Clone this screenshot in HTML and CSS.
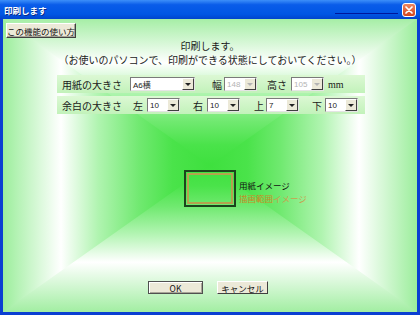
FILE: index.html
```html
<!DOCTYPE html>
<html lang="ja">

<head>
  <meta charset="UTF-8" />
  <title>印刷します</title>
  <link rel="stylesheet" href="styles.css">
</head>

<body>
  <div class="window">
    <div class="titlebar">
      <span class="title">印刷します</span>
      <span class="title-line"></span>
      <span class="close">
        <svg width="8" height="8" viewBox="0 0 8 8"><path d="M1 1L7 7M7 1L1 7" stroke="#fff" stroke-width="1.7" stroke-linecap="round" /></svg>
      </span>
    </div>

    <div class="client">
      <div class="content">
        <button class="help">この機能の使い方</button>

        <p class="message">印刷します。<br>（お使いのパソコンで、印刷ができる状態にしておいてください。）</p>

        <div class="settings">
          <div class="row">
            <span class="label">用紙の大きさ</span>
            <span class="combo paper"><span class="val">A6横</span><span class="drop"></span></span>
            <span class="word w-haba">幅</span>
            <span class="combo small off"><span class="val">148</span><span class="drop"></span></span>
            <span class="word w-takasa">高さ</span>
            <span class="combo small off"><span class="val">105</span><span class="drop"></span></span>
            <span class="unit">mm</span>
          </div>
          <div class="row">
            <span class="label">余白の大きさ</span>
            <span class="word w-left">左</span>
            <span class="combo small"><span class="val">10</span><span class="drop"></span></span>
            <span class="word w-right">右</span>
            <span class="combo small"><span class="val">10</span><span class="drop"></span></span>
            <span class="word w-top">上</span>
            <span class="combo small"><span class="val">7</span><span class="drop"></span></span>
            <span class="word w-bottom">下</span>
            <span class="combo small"><span class="val">10</span><span class="drop"></span></span>
          </div>
        </div>

        <div class="preview">
          <div class="sheet">
            <div class="area"></div>
          </div>
          <div class="legend">
            <span class="legend-paper">用紙イメージ</span>
            <span class="legend-area"><b>描画範囲</b>イメージ</span>
          </div>
        </div>

        <div class="actions">
          <button class="btn ok">OK</button>
          <button class="btn cancel">キャンセル</button>
        </div>
      </div>
    </div>
  </div>
</body>

</html>
```

FILE: styles.css
```css
body {
  margin: 0;
  font-family: "Noto Sans CJK JP", "DejaVu Sans", sans-serif;
  color: #1a1a1a;
}

.window {
  width: 420px;
  height: 315px;
  display: flex;
  flex-direction: column;
  background: #0b3fd2;
  overflow: hidden;
}

/* title bar */
.titlebar {
  height: 19px;
  flex: none;
  display: flex;
  align-items: center;
  padding: 0 4px 0 4px;
  background: linear-gradient(#3d8ff9, #0a5ce9 25%, #0056e4 75%, #0044cc);
  color: #fff;
}

.title {
  flex: 1;
  font-size: 8.5px;
  font-weight: bold;
  text-shadow: 1px 1px #0a2a86;
}

.title-line {
  width: 63px;
  height: 1px;
  margin: 7px 4px 0 0;
  background: #00169a;
}

.close {
  width: 14px;
  height: 14px;
  box-sizing: border-box;
  display: grid;
  place-items: center;
  border: 1px solid #fff;
  border-radius: 3px;
  background: linear-gradient(#ec8660, #d4461e);
}

.close svg {
  display: block;
}

/* client area with the box shaped gradient */
.client {
  flex: 1;
  margin: 0 3px 3px;
  position: relative;
  background: linear-gradient(to bottom,
      #a6eea6 0%, #ffffff 15%, #b0f4b0 25%, #70e970 35%, #4ae34a 43%, #3ee03e 50%,
      #4ae34a 57%, #70e970 64%, #b0f4b0 73%, #ffffff 83%, #a2eea2 100%);
}

.client::before {
  content: "";
  position: absolute;
  inset: 0;
  background: linear-gradient(to right,
      #9cee9c 0%, #ffffff 14%, #b0f4b0 23%, #70e970 33%, #4ae34a 41%, #3ee03e 50%,
      #4ae34a 59%, #70e970 67%, #b0f4b0 77%, #ffffff 86%, #9cee9c 100%);
  clip-path: polygon(0 0, 50% 50%, 100% 0, 100% 100%, 50% 50%, 0 100%);
}

.content {
  position: relative;
  height: 100%;
}

.help {
  display: block;
  margin: 4px 0 0 3px;
  width: 70px;
  height: 15px;
  padding: 0;
  box-sizing: border-box;
  font-family: "Noto Sans CJK JP", sans-serif;
  font-size: 8.5px;
  line-height: 12px;
  color: #111;
  background: #ece9d8;
  border: 1px solid;
  border-color: #ffffff #404040 #404040 #ffffff;
  box-shadow: inset -1px -1px #a8a598;
}

.message {
  margin: 1px 0 0;
  text-align: center;
  font-size: 10px;
  line-height: 14px;
}

/* size rows */
.settings {
  margin: 8px 0 0 54px;
  width: 308px;
  display: flex;
  flex-direction: column;
  gap: 3px;
}

.row {
  height: 18px;
  display: flex;
  align-items: center;
  padding-left: 5px;
  font-size: 10px;
  background: linear-gradient(#dcf8d4, #c2f2ba);
}

.label {
  width: 68px;
}

.combo {
  height: 14px;
  box-sizing: border-box;
  display: flex;
  align-items: center;
  background: #fff;
  border: 1px solid;
  border-color: #7a7a7a #e4e4e4 #e4e4e4 #7a7a7a;
  font-family: "Liberation Sans", "Noto Sans CJK JP", sans-serif;
  font-size: 8px;
  color: #222;
}

.combo .val {
  flex: 1;
  padding-left: 2px;
}

.combo .drop {
  width: 12px;
  height: 12px;
  box-sizing: border-box;
  display: grid;
  place-items: center;
  background: #ece9d8;
  border: 1px solid;
  border-color: #ffffff #404040 #404040 #ffffff;
}

.combo .drop::after {
  content: "";
  border: 3px solid transparent;
  border-top: 3px solid #222;
  border-bottom: 0;
}

.combo.off {
  color: #b4b4b4;
}

.combo.off .drop::after {
  border-top-color: #b4b4b4;
}

.paper {
  width: 65px;
}

.small {
  width: 33px;
}

.w-haba { margin: 0 2px 0 17px; }
.w-takasa { margin: 0 4px 0 10px; }
.w-left { margin: 0 4px 0 3px; }
.w-right { margin: 0 4px 0 13px; }
.w-top { margin: 0 2px 0 14px; }
.w-bottom { margin: 0 3px 0 13px; }

.unit {
  margin-left: 4px;
  font-family: "Liberation Serif", serif;
  font-size: 10px;
}

/* paper preview */
.preview {
  display: flex;
  align-items: flex-start;
  margin-top: 56px;
  padding-left: 181px;
}

.sheet {
  width: 52px;
  height: 37px;
  box-sizing: border-box;
  border: 2px solid #1c441c;
  padding: 1px;
}

.area {
  height: 100%;
  box-sizing: border-box;
  border: 2px solid #b4a24e;
}

.legend {
  display: flex;
  flex-direction: column;
  margin: 9px 0 0 3px;
  font-size: 8.5px;
  line-height: 13px;
}

.legend-paper {
  color: #111;
}

.legend-area {
  color: #c9a24e;
}

.legend-area b {
  font-weight: normal;
  color: #c98a26;
}

/* buttons */
.actions {
  display: flex;
  gap: 14px;
  margin-top: 74px;
  padding-left: 145px;
}

.btn {
  height: 13px;
  padding: 0;
  box-sizing: border-box;
  font-family: "Noto Sans CJK JP", sans-serif;
  font-size: 8.5px;
  line-height: 10px;
  color: #111;
  background: #ece9d8;
  border: 1px solid;
  border-color: #ffffff #404040 #404040 #ffffff;
}

.ok {
  width: 55px;
  border-color: #505050;
  box-shadow: inset 1px 1px #ffffff, inset -1px -1px #a8a598;
}

.cancel {
  width: 51px;
}
```
